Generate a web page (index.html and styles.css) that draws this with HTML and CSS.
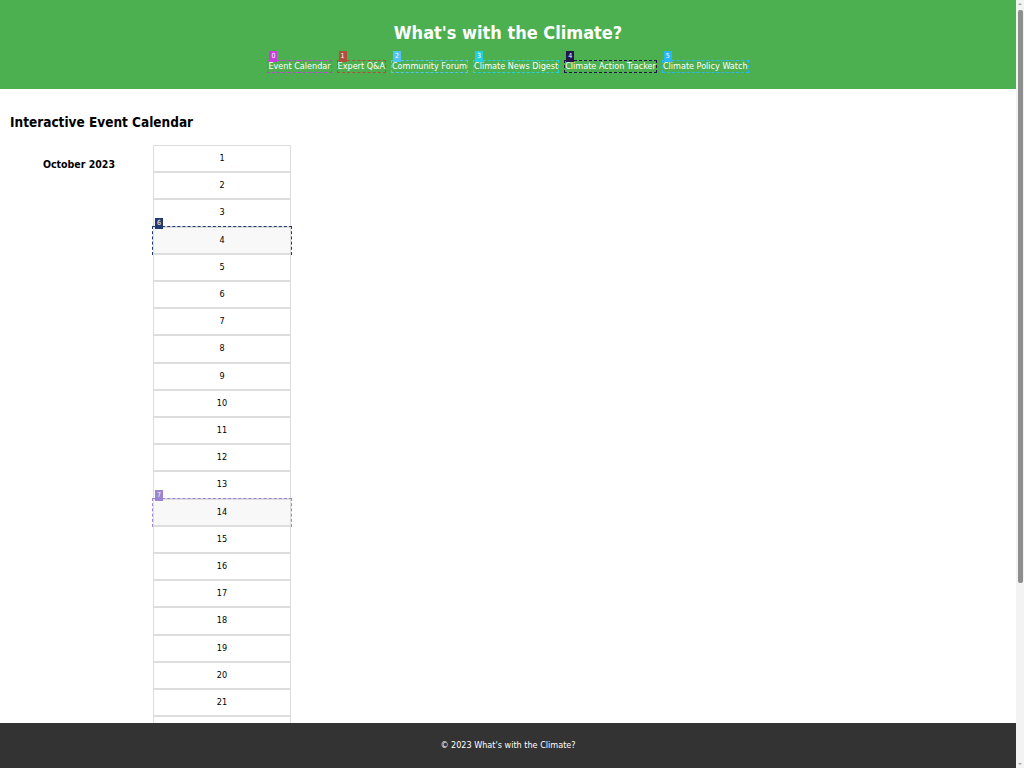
FILE: index.html
```html
<!DOCTYPE html>
<html lang="en">
<head>
<meta charset="utf-8">
<title>What's with the Climate?</title>
<link rel="stylesheet" href="styles.css">
</head>
<body>
<header class="site-header">
  <h1 class="site-title">What's with the Climate?</h1>
  <nav class="site-nav">
    <a class="nav-link c0" href="#"><span class="badge">0</span>Event Calendar</a>
    <a class="nav-link c1" href="#"><span class="badge">1</span>Expert Q&amp;A</a>
    <a class="nav-link c2" href="#"><span class="badge">2</span>Community Forum</a>
    <a class="nav-link c3" href="#"><span class="badge">3</span>Climate News Digest</a>
    <a class="nav-link c4" href="#"><span class="badge">4</span>Climate Action Tracker</a>
    <a class="nav-link c5" href="#"><span class="badge">5</span>Climate Policy Watch</a>
  </nav>
</header>
<main class="content">
  <h2 class="section-title">Interactive Event Calendar</h2>
  <div class="calendar">
    <h3 class="month">October 2023</h3>
    <div class="days">
      <div class="day">1</div>
      <div class="day">2</div>
      <div class="day">3</div>
      <div class="day hl c6"><span class="badge">6</span>4</div>
      <div class="day">5</div>
      <div class="day">6</div>
      <div class="day">7</div>
      <div class="day">8</div>
      <div class="day">9</div>
      <div class="day">10</div>
      <div class="day">11</div>
      <div class="day">12</div>
      <div class="day">13</div>
      <div class="day hl c7"><span class="badge">7</span>14</div>
      <div class="day">15</div>
      <div class="day">16</div>
      <div class="day">17</div>
      <div class="day">18</div>
      <div class="day">19</div>
      <div class="day">20</div>
      <div class="day">21</div>
      <div class="day">22</div>
      <div class="day">23</div>
      <div class="day">24</div>
      <div class="day">25</div>
      <div class="day">26</div>
      <div class="day">27</div>
      <div class="day">28</div>
      <div class="day">29</div>
      <div class="day">30</div>
      <div class="day">31</div>
    </div>
  </div>
</main>
<footer class="site-footer">© 2023 What's with the Climate?</footer>
<div class="scrollbar" aria-hidden="true">
  <span class="sb-arrow sb-up"></span>
  <span class="sb-thumb"></span>
  <span class="sb-arrow sb-down"></span>
</div>
</body>
</html>
```
FILE: styles.css
```css
html {
  font-family: "DejaVu Sans Condensed", "DejaVu Sans", sans-serif;
  font-stretch: condensed;
}

body {
  margin: 0 8px 0 0;
  font-size: 9px;
  color: #000;
  background: #fff;
}

.site-header {
  background: #4caf50;
  color: #fff;
  text-align: center;
  padding: 22px 0 16px;
}

.site-title {
  margin: 0;
  font-size: 18px;
  line-height: 21px;
  font-weight: bold;
}

.site-nav {
  margin-top: 17px;
  display: flex;
  justify-content: center;
  gap: 5px;
}

.nav-link {
  position: relative;
  display: inline-block;
  color: #fff;
  text-decoration: none;
  line-height: 11px;
  border: 1px dashed var(--c);
}

.badge {
  position: absolute;
  top: -10px;
  left: 1px;
  min-width: 8px;
  height: 11px;
  padding: 0 1px;
  box-sizing: border-box;
  background: var(--c);
  color: #fff;
  font-size: 7px;
  line-height: 11px;
  text-align: center;
}

.c0 { --c: #cc3be0; }
.c1 { --c: #b0503c; }
.c2 { --c: #4fc3f7; }
.c3 { --c: #26cfe0; }
.c4 { --c: #24164a; }
.c5 { --c: #29b6f6; }
.c6 { --c: #1e3a6e; }
.c7 { --c: #9b84d2; }

.content {
  padding: 25px 10px 10px;
}

.section-title {
  margin: 0 0 15px;
  font-size: 13.5px;
  line-height: 16px;
  font-weight: bold;
}

.calendar {
  display: grid;
  grid-template-columns: repeat(7, 1fr);
  gap: 5px;
  align-items: start;
}

.month {
  margin: 13px 0 0;
  font-size: 10.5px;
  line-height: 13px;
  text-align: center;
}

.days {
  display: flex;
  flex-direction: column;
}

.day {
  position: relative;
  border: 1px solid #ddd;
  padding: 7px 0;
  line-height: 11.2px;
  text-align: center;
  background: #fff;
}

.day.hl {
  background: #f8f8f8;
  outline: 1px dashed var(--c);
}

.site-footer {
  position: fixed;
  left: 0;
  right: 8px;
  bottom: 0;
  height: 45px;
  line-height: 45px;
  background: #333;
  color: #fff;
  text-align: center;
}

/* decorative scrollbar, drawn over the right edge */
.scrollbar {
  position: fixed;
  top: 0;
  right: 0;
  width: 8px;
  height: 100vh;
  background: #f3f3f3;
  display: flex;
  flex-direction: column;
  align-items: center;
}

.sb-arrow {
  width: 0;
  height: 0;
  border-left: 2px solid transparent;
  border-right: 2px solid transparent;
}

.sb-up {
  margin-top: 3px;
  border-bottom: 2px solid #a3a3a3;
}

.sb-thumb {
  margin-top: 5px;
  width: 5px;
  height: 573px;
  border-radius: 2px;
  background: #8e8e8e;
}

.sb-down {
  margin-top: auto;
  margin-bottom: 3px;
  border-top: 2px solid #a3a3a3;
}
```
